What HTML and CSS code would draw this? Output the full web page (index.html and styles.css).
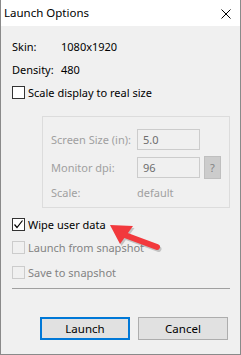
FILE: index.html
```html
<!DOCTYPE html>
<html>
<head>
<meta charset="utf-8">
<link rel="stylesheet" href="styles.css">
</head>
<body>
<div class="window">
  <div class="titlebar">
    <span class="title">Launch Options</span>
    <svg class="close" width="10" height="10" viewBox="0 0 10 10"><path d="M0.5 0.5 L9.5 9.5 M9.5 0.5 L0.5 9.5" stroke="#000" stroke-width="1" fill="none"/></svg>
  </div>
  <div class="content">
    <div class="info-row row-skin"><span class="info-label">Skin:</span><span>1080x1920</span></div>
    <div class="info-row row-density"><span class="info-label">Density:</span><span>480</span></div>
    <label class="check row-scale"><span class="box"></span><span>Scale display to real size</span></label>

    <div class="group">
      <div class="g-row g-row1"><span class="g-label">Screen Size (in):</span><span class="input">5.0</span></div>
      <div class="g-row g-row2"><span class="g-label">Monitor dpi:</span><span class="input">96</span><span class="help">?</span></div>
      <div class="g-row g-row3"><span class="g-label">Scale:</span><span class="g-value">default</span></div>
    </div>

    <label class="check row-wipe"><span class="box checked"><svg width="11" height="11" viewBox="0 0 11 11"><path d="M1.5 5.5 L4 8.5 L9.5 1.5" stroke="#000" stroke-width="1.2" fill="none"/></svg></span><span>Wipe user data</span></label>
    <label class="check disabled row-launchsnap"><span class="box"></span><span>Launch from snapshot</span></label>
    <label class="check disabled row-savesnap"><span class="box"></span><span>Save to snapshot</span></label>

    <div class="separator"></div>

    <div class="buttons">
      <button class="btn btn-default">Launch</button>
      <button class="btn">Cancel</button>
    </div>
  </div>
  <svg class="arrow" width="241" height="355" viewBox="0 0 241 355">
    <g transform="translate(1.5,2)" fill="#000" opacity="0.18">
      <polygon points="110,225 133,226 120,244"/>
      <line x1="122" y1="234" x2="157" y2="247" stroke="#000" stroke-width="6" stroke-linecap="round"/>
    </g>
    <polygon points="110,225 133,226 120,244" fill="#f2393d"/>
    <line x1="122" y1="234" x2="157" y2="247" stroke="#f2393d" stroke-width="6" stroke-linecap="round"/>
  </svg>
</div>
</body>
</html>
```

FILE: styles.css
```css
html, body {
  margin: 0;
  padding: 0;
}
body {
  font-family: "Noto Sans", "Open Sans", sans-serif;
  font-size: 11px;
  color: #000;
  background: #f0f0f0;
  white-space: nowrap;
}
.window {
  position: relative;
  width: 241px;
  height: 355px;
  box-sizing: border-box;
  border: 1px solid #8a8a8a;
  border-top: none;
  background: #f0f0f0;
  display: flex;
  flex-direction: column;
}
.titlebar {
  height: 26px;
  background: #fff;
  display: flex;
  align-items: center;
  justify-content: space-between;
  padding: 0 9px 0 3px;
  flex-shrink: 0;
}
.title {
  font-size: 11.5px;
  line-height: 16px;
  margin-top: -1px;
}
.close {
  display: block;
  margin-top: 1px;
}
.content {
  padding: 13px 0 0 11px;
  display: flex;
  flex-direction: column;
  align-items: flex-start;
}
.info-row {
  display: flex;
  height: 16px;
  line-height: 16px;
  align-items: center;
}
.info-label {
  width: 49px;
}
.row-density {
  margin-top: 7px;
}
.check {
  display: flex;
  align-items: center;
  height: 15px;
  line-height: 15px;
}
.box {
  width: 13px;
  height: 13px;
  box-sizing: border-box;
  border: 1px solid #333;
  background: #fff;
  margin-right: 3px;
  display: flex;
  align-items: center;
  justify-content: center;
  flex-shrink: 0;
}
.check.disabled {
  color: #838383;
}
.check.disabled .box {
  border-color: #cccccc;
  background: #f0f0f0;
}
.row-scale {
  margin-top: 7px;
}
.group {
  margin: 16px 0 0 30px;
  width: 188px;
  height: 92px;
  box-sizing: border-box;
  border: 1px solid #dcdcdc;
  padding: 12px 0 0 8px;
  display: flex;
  flex-direction: column;
  color: #a0a0a0;
}
.g-row {
  display: flex;
  align-items: center;
}
.g-label {
  width: 86px;
  flex-shrink: 0;
}
.input {
  width: 63px;
  height: 21px;
  box-sizing: border-box;
  border: 1px solid #cccccc;
  background: #f0f0f0;
  color: #6d6d6d;
  padding-left: 5px;
  line-height: 19px;
  flex-shrink: 0;
}
.g-row1 {
  height: 21px;
}
.g-row2 {
  height: 23px;
  margin-top: 6px;
}
.g-row3 {
  height: 16px;
  margin-top: 5px;
}
.help {
  margin-left: 4px;
  width: 17px;
  height: 23px;
  box-sizing: border-box;
  background: #cccccc;
  border: 1px solid #bfbfbf;
  color: #838383;
  text-align: center;
  line-height: 21px;
  flex-shrink: 0;
}
.g-value {
  color: #a0a0a0;
}
.row-wipe {
  margin-top: 9px;
}
.row-launchsnap {
  margin-top: 8px;
}
.row-savesnap {
  margin-top: 10px;
}
.separator {
  margin-top: 8px;
  width: 218px;
  height: 1px;
  background: #a0a0a0;
}
.buttons {
  margin: 28px 0 0 28px;
  display: flex;
  gap: 8px;
}
.btn {
  width: 90px;
  height: 23px;
  box-sizing: border-box;
  border: 1px solid #adadad;
  background: #e1e1e1;
  font-family: "Noto Sans", "Open Sans", sans-serif;
  font-size: 11.5px;
  color: #000;
  padding: 0;
  line-height: 19px;
}
.btn-default {
  border: 2px solid #0078d7;
}
.arrow {
  position: absolute;
  left: -1px;
  top: 0;
  pointer-events: none;
}
```
